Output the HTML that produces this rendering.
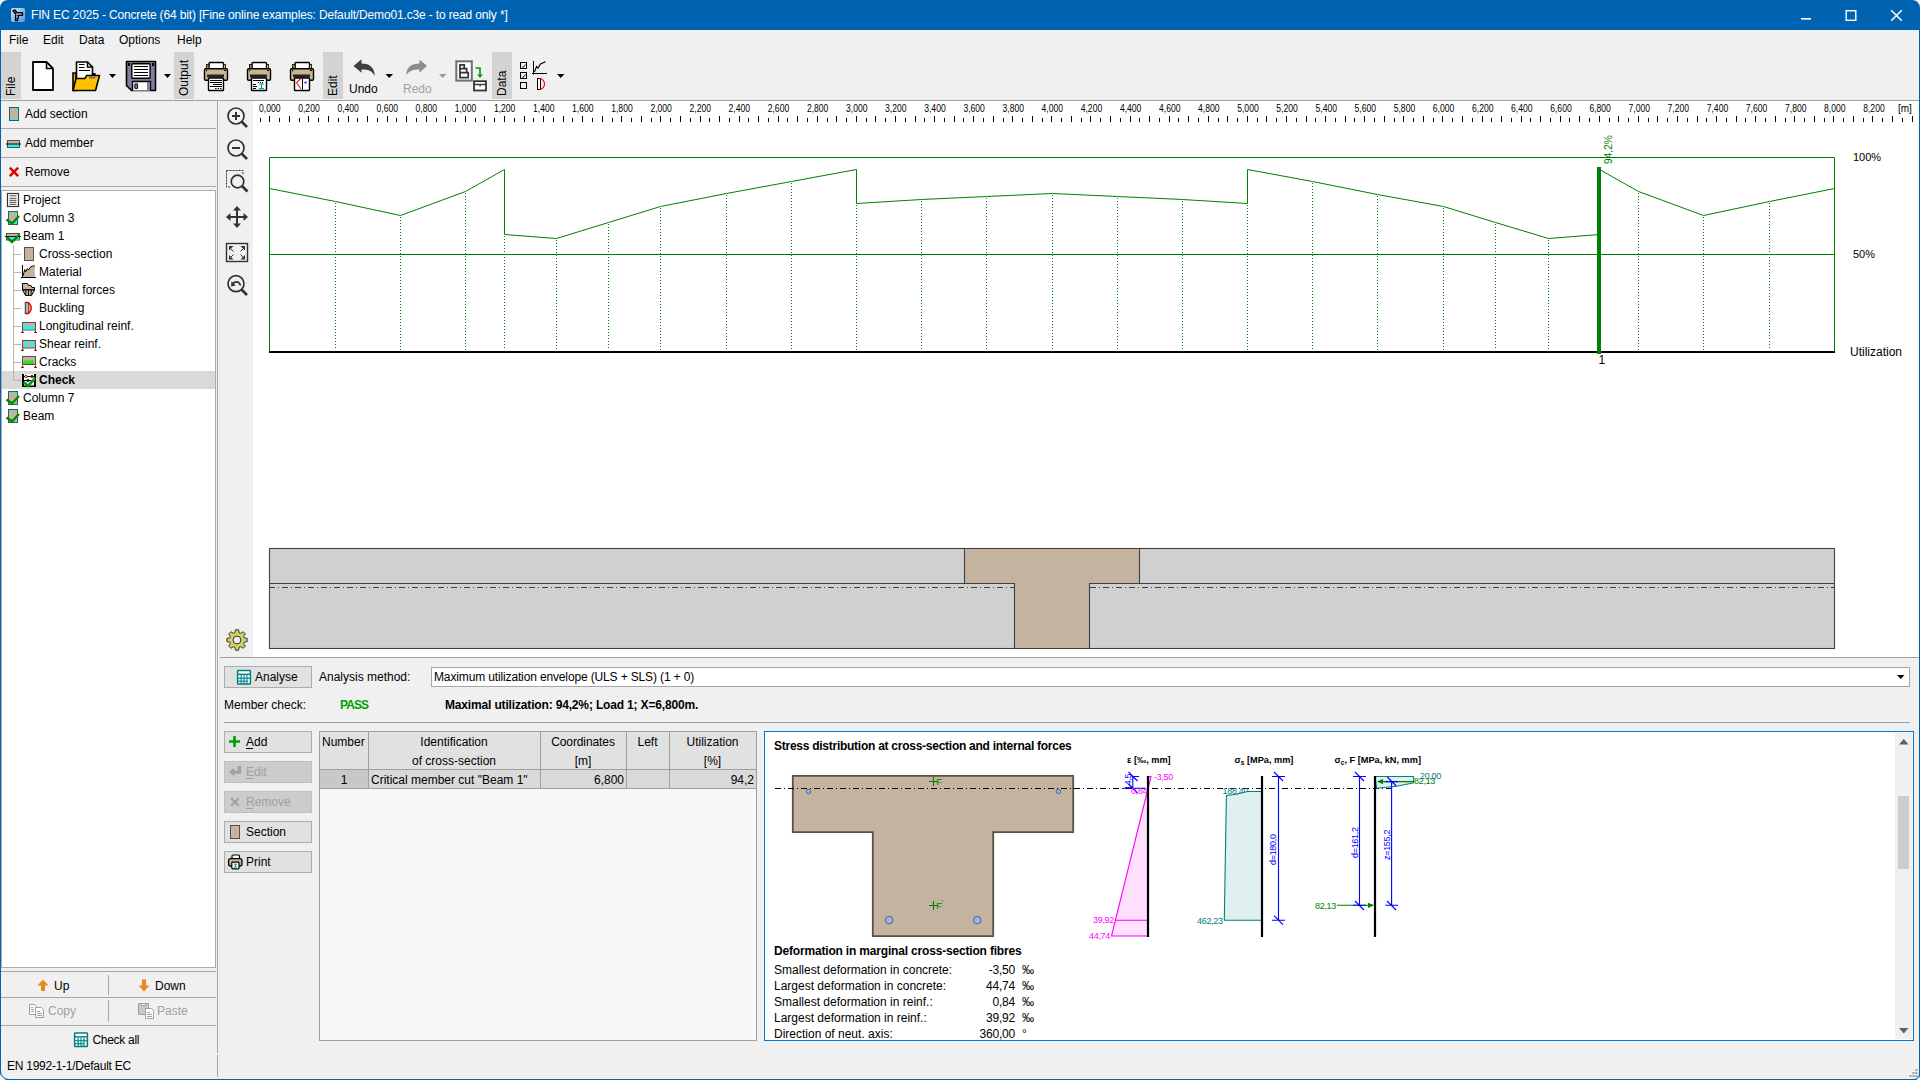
<!DOCTYPE html>
<html><head><meta charset="utf-8">
<style>
*{box-sizing:border-box;margin:0;padding:0}
html,body{width:1920px;height:1080px;overflow:hidden;background:#f0f0f0;font-family:"Liberation Sans",sans-serif;font-size:12px;color:#000}
.a{position:absolute}
.t{position:absolute;white-space:pre;line-height:14px;font-size:12px}
.b{font-weight:bold}
svg{position:absolute;overflow:visible}
</style></head><body>
<!-- window frame -->
<div class="a" style="left:0;top:0;width:1920px;height:30px;background:#0063b1"></div>
<div class="a" style="left:0;top:0;width:1px;height:1080px;background:#0063b1"></div>
<div class="a" style="left:1919px;top:0;width:1px;height:1080px;background:#0063b1"></div>
<div class="a" style="left:0;top:1079px;width:1920px;height:1px;background:#0063b1"></div>
<!-- title -->
<svg style="left:10px;top:7px" width="16" height="16" viewBox="10 7 16 16">
 <defs><linearGradient id="ig" x1="0" y1="0" x2="1" y2="1"><stop offset="0" stop-color="#cfe6f7"/><stop offset="0.5" stop-color="#8fc0e8"/><stop offset="1" stop-color="#4f95d6"/></linearGradient></defs>
 <rect x="11" y="8" width="14" height="14" rx="2" fill="url(#ig)"/>
 <path d="M12.8 10.8 L15 10 L17 12.8 L22.5 12.8 L22.5 15.2 L18.5 15.2 L17.5 20.5 L15.5 20.5 L15.8 14 Z" fill="#fff" stroke="#000" stroke-width="1.4" stroke-linejoin="round"/>
 <circle cx="15.5" cy="12.3" r="0.7" fill="#00f"/><circle cx="17.4" cy="15.5" r="0.7" fill="#00f"/><circle cx="16.5" cy="18.5" r="0.7" fill="#00f"/>
</svg>
<div class="t" style="left:31px;top:8px;color:#fff;letter-spacing:-0.15px">FIN EC 2025 - Concrete (64 bit) [Fine online examples: Default/Demo01.c3e - to read only *]</div>
<!-- window buttons -->
<svg style="left:1790px;top:0" width="120" height="30" viewBox="1790 0 120 30">
 <path d="M1801 18.8 H1811" stroke="#fff" stroke-width="1.6"/>
 <rect x="1846.2" y="10.7" width="9.6" height="9.6" fill="none" stroke="#fff" stroke-width="1.4"/>
 <path d="M1891.2 10.2 L1901.8 20.8 M1901.8 10.2 L1891.2 20.8" stroke="#fff" stroke-width="1.5"/>
</svg>
<!-- menu -->
<div class="t" style="left:9px;top:33px">File</div>
<div class="t" style="left:43px;top:33px">Edit</div>
<div class="t" style="left:79px;top:33px">Data</div>
<div class="t" style="left:119px;top:33px">Options</div>
<div class="t" style="left:177px;top:33px">Help</div>
<!-- toolbar -->
<!-- toolbar tabs -->
<div class="a" style="left:1px;top:52px;width:20px;height:47px;background:#d3d3d3"></div>
<div class="a" style="left:174px;top:52px;width:20px;height:47px;background:#d3d3d3"></div>
<div class="a" style="left:323px;top:52px;width:20px;height:47px;background:#d3d3d3"></div>
<div class="a" style="left:492px;top:52px;width:20px;height:47px;background:#d3d3d3"></div>
<div class="t" style="left:5px;top:96px;transform-origin:0 0;transform:rotate(-90deg);line-height:12px">File</div>
<div class="t" style="left:178px;top:96px;transform-origin:0 0;transform:rotate(-90deg);line-height:12px">Output</div>
<div class="t" style="left:327px;top:96px;transform-origin:0 0;transform:rotate(-90deg);line-height:12px">Edit</div>
<div class="t" style="left:496px;top:96px;transform-origin:0 0;transform:rotate(-90deg);line-height:12px">Data</div>
<div class="t" style="left:349px;top:82px">Undo</div>
<div class="t" style="left:403px;top:82px;color:#a0a0a0">Redo</div>
<svg style="left:0;top:0" width="600" height="100" viewBox="0 0 600 100">
 <!-- new -->
 <path d="M33 62 H46.5 L53 68.5 V90 H33 Z" fill="#fff" stroke="#000" stroke-width="1.8" stroke-linejoin="round"/>
 <path d="M46.5 62 V68.5 H53" fill="none" stroke="#000" stroke-width="1.6"/>
 <!-- open -->
 <path d="M73 73 H76 V90.5 H73 Z" fill="#ffb400" stroke="#000" stroke-width="1.6"/>
 <path d="M76.5 62 H87.5 L92.5 67 V79 H76.5 Z" fill="#fff" stroke="#000" stroke-width="1.6" stroke-linejoin="round"/>
 <path d="M87.5 62 V67 H92.5" fill="none" stroke="#000" stroke-width="1.4"/>
 <line x1="79" y1="64.5" x2="84.5" y2="64.5" stroke="#000" stroke-width="1"/>
 <line x1="79" y1="67.5" x2="84.5" y2="67.5" stroke="#000" stroke-width="1"/>
 <line x1="79" y1="70.5" x2="90" y2="70.5" stroke="#000" stroke-width="1"/>
 <path d="M92 73.5 H95 V75 Z" fill="#ffb400" stroke="#000" stroke-width="1.2"/>
 <path d="M76 78.5 H85 L86.5 75.5 H99.5 L95.5 90.5 H73 Z" fill="#ffc000" stroke="#000" stroke-width="1.6" stroke-linejoin="round"/>
 <rect x="89" y="77" width="6.5" height="1.5" fill="#5a6a9a"/>
 <path d="M109 74 H116 L112.5 78 Z" fill="#000"/>
 <!-- save -->
 <path d="M126.5 61.5 H155.5 V90.5 H131.5 L126.5 85.5 Z" fill="#7f7fa0" stroke="#000" stroke-width="1.6" stroke-linejoin="round"/>
 <rect x="131.8" y="63.8" width="18.3" height="14.5" rx="0.8" fill="#fff" stroke="#000" stroke-width="1.4"/>
 <g stroke="#000" stroke-width="1"><line x1="134" y1="66.5" x2="148" y2="66.5"/><line x1="134" y1="69.5" x2="148" y2="69.5"/><line x1="134" y1="72.5" x2="148" y2="72.5"/><line x1="134" y1="75.5" x2="148" y2="75.5"/></g>
 <rect x="128" y="63" width="2" height="3" fill="#000"/><rect x="152" y="63" width="2" height="3" fill="#000"/>
 <path d="M132.5 90.5 V81.5 H150.5 V90.5" fill="#fff" stroke="#000" stroke-width="1.4"/>
 <rect x="147" y="82" width="3" height="8" fill="#7f7fa0"/>
 <rect x="134.8" y="83.8" width="2.8" height="4.8" rx="0.6" fill="#7f7fa0" stroke="#000" stroke-width="1"/>
 <path d="M164 74 H171 L167.5 78 Z" fill="#000"/>
 <!-- printers -->
 <g id="pr">
  <rect x="209" y="62.5" width="14.5" height="6.5" rx="1" fill="#fff" stroke="#000" stroke-width="1.4"/>
  <rect x="206.5" y="64.5" width="2.5" height="4" fill="#9a8a6a" stroke="#000" stroke-width="0.8"/>
  <rect x="223.5" y="64.5" width="2" height="4" fill="#c8b68e" stroke="#000" stroke-width="0.8"/>
  <rect x="204.5" y="68.8" width="23" height="11.5" rx="1.2" fill="#c8b68e" stroke="#000" stroke-width="1.4"/>
  <rect x="206" y="70" width="1.2" height="1.2" fill="#000"/><rect x="224" y="70" width="2" height="1" fill="#000"/>
  <rect x="207" y="74.5" width="17" height="2.5" fill="#222"/>
  <rect x="207.5" y="77" width="16" height="1.5" fill="#777"/>
 </g>
 <rect x="208.5" y="78" width="15" height="12.5" rx="0.8" fill="#fff" stroke="#000" stroke-width="1.4"/>
 <g stroke="#000" stroke-width="1"><line x1="210" y1="80.5" x2="222" y2="80.5"/><line x1="210" y1="82.5" x2="222" y2="82.5"/><line x1="213" y1="84.5" x2="222" y2="84.5"/><line x1="210" y1="86.5" x2="222" y2="86.5"/><line x1="215" y1="88.5" x2="222" y2="88.5" stroke-dasharray="1.5 1"/></g>
 <use href="#pr" x="43"/>
 <rect x="251.5" y="78" width="15" height="12.5" rx="0.8" fill="#fff" stroke="#000" stroke-width="1.4"/>
 <g stroke="#000" stroke-width="1"><line x1="253" y1="80.5" x2="264" y2="80.5"/><line x1="258" y1="82.5" x2="264" y2="82.5" stroke-dasharray="1 1"/><line x1="253" y1="84.5" x2="256" y2="84.5"/><line x1="253" y1="86.5" x2="257" y2="86.5"/><line x1="253" y1="88.5" x2="256" y2="88.5"/></g>
 <path d="M259 84 H264 M261.5 84 V88.5 M259 88.5 H264" stroke="#0a9a9a" stroke-width="1.1" fill="none"/>
 <use href="#pr" x="86"/>
 <rect x="294.5" y="78" width="15" height="12.5" rx="0.8" fill="#fff" stroke="#000" stroke-width="1.4"/>
 <path d="M301 78.5 L296.5 82.5 L301 89" fill="none" stroke="#ff2020" stroke-width="1.1"/>
 <line x1="302.5" y1="78.5" x2="302.5" y2="89.5" stroke="#000" stroke-width="1"/>
 <path d="M303.5 82.5 L306.5 81 V84 Z" fill="#2040ff"/>
 <!-- undo -->
 <path d="M353.5 66 L361.5 59.2 V63.5 C368 63.5 374.5 66 374.8 76 C372 70.5 368 69.5 361.5 69.5 V72.8 Z" fill="#404040"/>
 <path d="M385.5 74 H393 L389.2 78 Z" fill="#000"/>
 <!-- redo -->
 <path d="M427 65.8 L419.5 59.7 V63.5 C413 63.5 406.5 66 406.2 75.5 C409 70.5 413 69.5 419.5 69.5 V72.8 Z" fill="#8c8c8c"/>
 <path d="M439 74 H446.5 L442.7 78 Z" fill="#999"/>
 <!-- layout -->
 <rect x="456.3" y="61.3" width="15.5" height="19.3" fill="#fff" stroke="#707070" stroke-width="2"/>
 <path d="M460 64.8 H464.2 V68.6 H466.6 V72.6 H468.2 V77.6 H460 Z M460 68.6 H464.2 M460 72.6 H466.6" fill="none" stroke="#333" stroke-width="1.7"/>
 <path d="M475.5 68 H480 V75" fill="none" stroke="#00a000" stroke-width="1.6"/>
 <path d="M477 74.5 H483 L480 78 Z" fill="#00a000"/>
 <rect x="474" y="81.2" width="12" height="9.3" fill="#fff" stroke="#333" stroke-width="1.8"/>
 <line x1="474" y1="84.5" x2="486" y2="84.5" stroke="#333" stroke-width="1.4"/>
 <rect x="479.5" y="85" width="1.2" height="1.5" fill="#333"/>
 <!-- data icons -->
 <g fill="none" stroke="#000" stroke-width="1">
  <rect x="520.5" y="62.5" width="6" height="6"/><rect x="520.5" y="72.5" width="6" height="6"/><rect x="520.5" y="82.5" width="6" height="6"/>
  <path d="M522 66.5 L523 67.5 L525.5 64.5 M522 76.5 L523 77.5 L525.5 74.5" stroke-width="0.9"/>
  <path d="M533.5 61 V74.5 M532 73.5 H547"/>
  <path d="M534.5 72 L536.5 66.5 L538 68 L540.5 64 L545.5 61.8" stroke-width="1.1"/>
 </g>
 <rect x="537.5" y="78.5" width="3" height="11" fill="#fff" stroke="#000" stroke-width="1"/>
 <path d="M539.5 78.5 A5 5.5 0 0 1 539.5 89.5" fill="none" stroke="#e00000" stroke-width="1.1"/>
 <path d="M557 74 H564.5 L560.7 78 Z" fill="#000"/>
</svg>

<div class="a" style="left:1px;top:100px;width:1918px;height:1px;background:#a0a0a0"></div>

<!-- left panel -->
<!-- left panel -->
<div class="a" style="left:1px;top:128px;width:215px;height:1px;background:#a8a8a8"></div>
<div class="a" style="left:1px;top:157px;width:215px;height:1px;background:#a8a8a8"></div>
<div class="a" style="left:1px;top:186px;width:215px;height:1px;background:#a8a8a8"></div>
<div class="a" style="left:217px;top:101px;width:1px;height:952px;background:#a8a8a8"></div><div class="a" style="left:217px;top:1055px;width:1px;height:22px;background:#a8a8a8"></div>
<div class="t" style="left:25px;top:107px">Add section</div>
<div class="t" style="left:25px;top:136px">Add member</div>
<div class="t" style="left:25px;top:165px">Remove</div>
<svg style="left:0;top:100px" width="30" height="90" viewBox="0 100 30 90">
 <rect x="9.5" y="107.5" width="9" height="13" fill="#c4b49f" stroke="#5a4f45" stroke-width="1"/>
 <g fill="#00ffff"><rect x="10" y="108" width="2" height="2"/><rect x="16" y="108" width="2" height="2"/><rect x="10" y="118" width="2" height="2"/><rect x="13" y="118" width="2" height="2"/><rect x="16" y="118" width="2" height="2"/></g>
 <rect x="7.5" y="140.5" width="12" height="7" fill="#c4b49f" stroke="#5a4f45" stroke-width="1"/>
 <rect x="8" y="145" width="11" height="2" fill="#00ffff"/>
 <line x1="6" y1="144" x2="21" y2="144" stroke="#000" stroke-width="1"/>
 <path d="M9.8 167.6 L18.2 176.2 M18.2 167.6 L9.8 176.2" stroke="#e00000" stroke-width="2.4"/>
</svg>
<div class="a" style="left:1px;top:190px;width:215px;height:778px;background:#fff;border:1px solid #acacac"></div>
<div class="a" style="left:2px;top:371px;width:213px;height:18px;background:#d9d9d9"></div>
<div class="a" style="left:13px;top:245px;width:1px;height:136px;background:#b4b4b4"></div>
<div class="t" style="left:23px;top:193px;">Project</div>
<div class="t" style="left:23px;top:211px;">Column 3</div>
<div class="t" style="left:23px;top:229px;">Beam 1</div>
<div class="t" style="left:39px;top:247px;">Cross-section</div>
<div class="a" style="left:14px;top:254px;width:7px;height:1px;background:#b4b4b4"></div>
<div class="t" style="left:39px;top:265px;">Material</div>
<div class="a" style="left:14px;top:272px;width:7px;height:1px;background:#b4b4b4"></div>
<div class="t" style="left:39px;top:283px;">Internal forces</div>
<div class="a" style="left:14px;top:290px;width:7px;height:1px;background:#b4b4b4"></div>
<div class="t" style="left:39px;top:301px;">Buckling</div>
<div class="a" style="left:14px;top:308px;width:7px;height:1px;background:#b4b4b4"></div>
<div class="t" style="left:39px;top:319px;">Longitudinal reinf.</div>
<div class="a" style="left:14px;top:326px;width:7px;height:1px;background:#b4b4b4"></div>
<div class="t" style="left:39px;top:337px;">Shear reinf.</div>
<div class="a" style="left:14px;top:344px;width:7px;height:1px;background:#b4b4b4"></div>
<div class="t" style="left:39px;top:355px;">Cracks</div>
<div class="a" style="left:14px;top:362px;width:7px;height:1px;background:#b4b4b4"></div>
<div class="t" style="left:39px;top:373px;font-weight:bold;">Check</div>
<div class="a" style="left:14px;top:380px;width:7px;height:1px;background:#b4b4b4"></div>
<div class="t" style="left:23px;top:391px;">Column 7</div>
<div class="t" style="left:23px;top:409px;">Beam</div>
<svg style="left:0;top:0" width="40" height="430" viewBox="0 0 40 430">
 <defs>
  <g id="colic">
   <rect x="8.5" y="211.5" width="9" height="13" fill="#c4b49f" stroke="#5a4f45" stroke-width="1"/>
   <g fill="#00ffff"><rect x="9" y="212" width="2" height="2"/><rect x="15" y="212" width="2" height="2"/><rect x="9" y="222" width="2" height="2"/><rect x="15" y="222" width="2" height="2"/></g>
   <path d="M6.5 219.5 L12 223.5 L19 216" fill="none" stroke="#008a00" stroke-width="2.4"/>
  </g>
  <g id="sup"><path d="M21 2 A1.5 1.5 0 0 1 24 2 Z M34 2 A1.5 1.5 0 0 1 37 2 Z" fill="#8b0000"/><path d="M22.5 -0.5 V1 M35.5 -0.5 V1" stroke="#8b0000" stroke-width="1"/></g>
 </defs>
 <!-- project -->
 <rect x="7.5" y="193.5" width="11" height="13" fill="#fff" stroke="#333" stroke-width="1.2"/>
 <g stroke="#333" stroke-width="0.9"><line x1="9.5" y1="195.8" x2="16.5" y2="195.8"/><line x1="9.5" y1="198.3" x2="16.5" y2="198.3"/><line x1="9.5" y1="200.3" x2="16.5" y2="200.3"/><line x1="9.5" y1="202.3" x2="16.5" y2="202.3"/><line x1="9.5" y1="204.3" x2="16.5" y2="204.3"/></g>
 <use href="#colic"/>
 <!-- beam1 -->
 <rect x="6.5" y="233.5" width="13" height="6.5" fill="#c4b49f" stroke="#5a4f45" stroke-width="1"/>
 <rect x="7" y="237.5" width="12" height="2" fill="#00ffff"/>
 <line x1="5" y1="236.5" x2="21" y2="236.5" stroke="#000" stroke-width="0.9"/>
 <path d="M7 237.5 L12 242 L19.5 234.5" fill="none" stroke="#008a00" stroke-width="2.4"/>
 <!-- cross-section -->
 <rect x="24.5" y="247.5" width="9" height="13" fill="#c4b49f" stroke="#5a4f45" stroke-width="1"/>
 <!-- material -->
 <path d="M23.5 277 L24.8 269.5 L25.5 272 L27.5 268.5 L28.5 270 L30.5 267 L32.5 266 H34.8 V277 Z" fill="#c4b49f"/>
 <path d="M22.5 265 V278 M21 277.5 H36 M23 276 L24.8 269.5 L25.5 272 L27.5 268.5 L28.5 270 L30.5 267 L32.5 266 H34.8" fill="none" stroke="#000" stroke-width="1"/>
 <!-- internal forces -->
 <path d="M22.5 283.5 H27.5 L28.5 285.5 H31 L32 287.5 H34.5 V290 L31.5 295.5 H25.5 L22.5 290 Z" fill="#c4b49f" stroke="#000" stroke-width="1"/>
 <path d="M22.5 289.8 H34.5" stroke="#000" stroke-width="1.3"/>
 <path d="M25.8 290 V295 M28.5 290 V295.5 M31.2 290 V295" stroke="#000" stroke-width="0.9"/>
 <!-- buckling -->
 <rect x="25.3" y="302.5" width="3.5" height="11" fill="#c4b49f" stroke="#333" stroke-width="1"/>
 <path d="M26 302.3 A5 5.6 0 0 1 26 313.8" fill="none" stroke="#ff0000" stroke-width="1.6"/>
 <!-- longitudinal -->
 <rect x="22.5" y="322.5" width="13" height="7.5" fill="#c4b49f" stroke="#5a4f45" stroke-width="1"/>
 <rect x="23" y="327" width="12" height="2.5" fill="#00ffff"/>
 <path d="M23 323.5 H25.5 L28.5 326.5" fill="none" stroke="#00ffff" stroke-width="1"/>
 <use href="#sup" y="331"/>
 <!-- shear -->
 <rect x="22.5" y="340.5" width="13" height="7.5" fill="#c4b49f" stroke="#5a4f45" stroke-width="1"/>
 <g fill="#00ffff"><rect x="24" y="341" width="1.2" height="6.5"/><rect x="27" y="341" width="1.2" height="6.5"/><rect x="30" y="341" width="1.2" height="6.5"/><rect x="33" y="341" width="1.2" height="6.5"/></g>
 <use href="#sup" y="349"/>
 <!-- cracks -->
 <rect x="22.5" y="356.5" width="13" height="8" fill="#c4b49f" stroke="#5a4f45" stroke-width="1"/>
 <path d="M23.5 364 L24.5 360 L25.5 364 L26.5 360 L27.5 364 L28.5 360 L29.5 364 L30.5 360 L31.5 364 L32.5 360 L33.5 364" fill="#20e020" stroke="#20e020" stroke-width="0.9"/>
 <use href="#sup" y="366"/>
 <!-- check -->
 <rect x="23" y="374" width="12" height="12" fill="#fff"/>
 <path d="M23 374 V386 H35 V374" fill="none" stroke="#000" stroke-width="2"/>
 <rect x="24" y="384.6" width="10" height="1" fill="#e0c8a8"/>
 <path d="M23 376.5 H35 M23 380.5 H35" stroke="#000" stroke-width="1"/>
 <ellipse cx="26" cy="376.5" rx="1.4" ry="1.1" fill="#e8e000" stroke="#000" stroke-width="0.6"/>
 <ellipse cx="32" cy="376.5" rx="1.4" ry="1.1" fill="#e00000" stroke="#000" stroke-width="0.6"/>
 <ellipse cx="28" cy="380.5" rx="1.4" ry="1.1" fill="#0000e0" stroke="#000" stroke-width="0.6"/>
 <path d="M23.8 382 L28 386 L35.3 378" fill="none" stroke="#00a000" stroke-width="2.6"/>
 <use href="#colic" y="180"/>
 <use href="#colic" y="198"/>
</svg>
<div class="a" style="left:1px;top:971px;width:215px;height:1px;background:#a8a8a8"></div>
<div class="a" style="left:1px;top:997px;width:215px;height:1px;background:#a8a8a8"></div>
<div class="a" style="left:1px;top:1025px;width:215px;height:1px;background:#a8a8a8"></div>
<div class="a" style="left:108px;top:975px;width:1px;height:20px;background:#a8a8a8"></div>
<div class="a" style="left:108px;top:1000px;width:1px;height:22px;background:#a8a8a8"></div>
<div class="t" style="left:54px;top:979px">Up</div>
<div class="t" style="left:155px;top:979px">Down</div>
<div class="t" style="left:48px;top:1004px;color:#a0a0a0">Copy</div>
<div class="t" style="left:157px;top:1004px;color:#a0a0a0">Paste</div>
<div class="t" style="left:92.5px;top:1033px;letter-spacing:-0.3px">Check all</div>
<div class="t" style="left:7px;top:1059px;letter-spacing:-0.25px">EN 1992-1-1/Default EC</div>
<svg style="left:0;top:960px" width="220" height="100" viewBox="0 960 220 100">
 <path d="M43 979.5 L48.5 985.5 H45 V991 H41 V985.5 H37.5 Z" fill="#e8891a"/>
 <path d="M144 991.5 L149.5 985.5 H146 V979.5 H142 V985.5 H138.5 Z" fill="#e8891a"/>
 <g fill="#fff" stroke="#a0a0a0" stroke-width="1">
  <path d="M29.5 1004.5 H34.5 L36.5 1006.5 V1014.5 H29.5 Z"/>
  <path d="M35.5 1007.5 H41.5 L43.5 1009.5 V1017.5 H35.5 Z"/>
  <path d="M138.5 1003.5 H148.5 V1014.5 H138.5 Z" fill="#c8c8c8"/>
  <path d="M141.5 1003.5 H145.5 V1005.5 H141.5 Z" fill="#fff"/>
  <path d="M145.5 1008.5 H151.5 L153.5 1010.5 V1018.5 H145.5 Z"/>
 </g>
 <g stroke="#a0a0a0" stroke-width="1">
  <path d="M31 1007.5 H33 M31 1009.5 H34 M31 1011.5 H34 M37 1011.5 H40 M37 1013.5 H42 M37 1015.5 H42 M147 1012.5 H150 M147 1014.5 H152 M147 1016.5 H152"/>
 </g>
<g transform="translate(-163 362.5)"> <rect x="237.6" y="670.6" width="12.8" height="13.4" rx="0.5" fill="#fff" stroke="#008080" stroke-width="1.5"/>
 <g fill="#008080"><rect x="238" y="673.6" width="12" height="1.4"/><rect x="240.6" y="675" width="1.1" height="9"/><rect x="243.5" y="675" width="1.1" height="9"/><rect x="246.4" y="675" width="1.1" height="9"/><rect x="238" y="677.7" width="12" height="1.1"/><rect x="238" y="680.6" width="9.5" height="1.1"/></g></g>
</svg>


<!-- main canvas -->
<div class="a" style="left:253px;top:101px;width:1666px;height:556px;background:#fff"></div>
<div class="a" style="left:220px;top:657px;width:1699px;height:1px;background:#a0a0a0"></div>
<svg style="left:0;top:0" width="1920" height="660" viewBox="0 0 1920 660">
<g fill="none" stroke="#333" stroke-width="1.7">
 <circle cx="236" cy="116" r="8"/><path d="M241.5 121.5 L247 127" stroke-width="2.6"/><path d="M232 116 H240 M236 112 V120" stroke-width="2"/>
 <circle cx="236" cy="148" r="8"/><path d="M241.5 153.5 L247 159" stroke-width="2.6"/><path d="M232 148 H240" stroke-width="2"/>
 <path d="M226.5 170.5 H243 V175 M226.5 170.5 V187 H231" stroke-width="1" stroke-dasharray="2 1"/>
 <circle cx="237.5" cy="181.5" r="6.3"/><path d="M242 186 L247.5 191.5" stroke-width="2.6"/>
 <path d="M229 217 H245 M237 209 V225" stroke-width="2"/>
 <rect x="226.5" y="243.5" width="21" height="18" stroke-width="1.4"/>
 <circle cx="236" cy="283.7" r="8"/><path d="M241.5 289.5 L247 295" stroke-width="2.6"/>
 <path d="M233 285 C233.5 281 239 280.5 240.5 285.5" stroke-width="1.7"/>
</g>
<g fill="#333">
 <path d="M226 217 L230.5 213 V221 Z M248 217 L243.5 213 V221 Z M237 206 L233 210.5 H241 Z M237 228 L233 223.5 H241 Z"/>
 <path d="M229 246 H233.5 L229 250.5 Z M245 246 V250.5 L240.5 246 Z M229 259.5 V255 L233.5 259.5 Z M245 259.5 H240.5 L245 255 Z"/>
 <path d="M231.5 281 L235.5 285.5 L231 286.5 Z"/>
</g>
<g stroke="#333" stroke-width="1"><path d="M230.5 248.5 L233.5 251.5 M243.5 248.5 L240.5 251.5 M230.5 257.5 L233.5 254.5 M243.5 257.5 L240.5 254.5"/></g>

<g transform="translate(237 640)">
 <path d="M-2.09 -7.31 L-1.61 -10.17 L1.61 -10.17 L2.09 -7.31 L3.68 -6.65 L6.05 -8.33 L8.33 -6.05 L6.65 -3.68 L7.31 -2.09 L10.17 -1.61 L10.17 1.61 L7.31 2.09 L6.65 3.68 L8.33 6.05 L6.05 8.33 L3.68 6.65 L2.09 7.31 L1.61 10.17 L-1.61 10.17 L-2.09 7.31 L-3.68 6.65 L-6.05 8.33 L-8.33 6.05 L-6.65 3.68 L-7.31 2.09 L-10.17 1.61 L-10.17 -1.61 L-7.31 -2.09 L-6.65 -3.68 L-8.33 -6.05 L-6.05 -8.33 L-3.68 -6.65 Z" fill="#d0d064" stroke="#333" stroke-width="1"/>
 <circle r="3.9" fill="#f0f0f0" stroke="#333" stroke-width="1"/>
</g>
<path d="M260.5 118 V122 M269.5 116 V122 M279.5 118 V122 M289.5 116 V122 M299.5 118 V122 M308.5 116 V122 M318.5 118 V122 M328.5 116 V122 M338.5 118 V122 M348.5 116 V122 M357.5 118 V122 M367.5 116 V122 M377.5 118 V122 M387.5 116 V122 M396.5 118 V122 M406.5 116 V122 M416.5 118 V122 M426.5 116 V122 M436.5 118 V122 M445.5 116 V122 M455.5 118 V122 M465.5 116 V122 M475.5 118 V122 M484.5 116 V122 M494.5 118 V122 M504.5 116 V122 M514.5 118 V122 M524.5 116 V122 M533.5 118 V122 M543.5 116 V122 M553.5 118 V122 M563.5 116 V122 M572.5 118 V122 M582.5 116 V122 M592.5 118 V122 M602.5 116 V122 M612.5 118 V122 M621.5 116 V122 M631.5 118 V122 M641.5 116 V122 M651.5 118 V122 M660.5 116 V122 M670.5 118 V122 M680.5 116 V122 M690.5 118 V122 M700.5 116 V122 M709.5 118 V122 M719.5 116 V122 M729.5 118 V122 M739.5 116 V122 M748.5 118 V122 M758.5 116 V122 M768.5 118 V122 M778.5 116 V122 M787.5 118 V122 M797.5 116 V122 M807.5 118 V122 M817.5 116 V122 M827.5 118 V122 M836.5 116 V122 M846.5 118 V122 M856.5 116 V122 M866.5 118 V122 M875.5 116 V122 M885.5 118 V122 M895.5 116 V122 M905.5 118 V122 M915.5 116 V122 M924.5 118 V122 M934.5 116 V122 M944.5 118 V122 M954.5 116 V122 M963.5 118 V122 M973.5 116 V122 M983.5 118 V122 M993.5 116 V122 M1003.5 118 V122 M1012.5 116 V122 M1022.5 118 V122 M1032.5 116 V122 M1042.5 118 V122 M1051.5 116 V122 M1061.5 118 V122 M1071.5 116 V122 M1081.5 118 V122 M1090.5 116 V122 M1100.5 118 V122 M1110.5 116 V122 M1120.5 118 V122 M1130.5 116 V122 M1139.5 118 V122 M1149.5 116 V122 M1159.5 118 V122 M1169.5 116 V122 M1178.5 118 V122 M1188.5 116 V122 M1198.5 118 V122 M1208.5 116 V122 M1218.5 118 V122 M1227.5 116 V122 M1237.5 118 V122 M1247.5 116 V122 M1257.5 118 V122 M1266.5 116 V122 M1276.5 118 V122 M1286.5 116 V122 M1296.5 118 V122 M1306.5 116 V122 M1315.5 118 V122 M1325.5 116 V122 M1335.5 118 V122 M1345.5 116 V122 M1354.5 118 V122 M1364.5 116 V122 M1374.5 118 V122 M1384.5 116 V122 M1394.5 118 V122 M1403.5 116 V122 M1413.5 118 V122 M1423.5 116 V122 M1433.5 118 V122 M1442.5 116 V122 M1452.5 118 V122 M1462.5 116 V122 M1472.5 118 V122 M1482.5 116 V122 M1491.5 118 V122 M1501.5 116 V122 M1511.5 118 V122 M1521.5 116 V122 M1530.5 118 V122 M1540.5 116 V122 M1550.5 118 V122 M1560.5 116 V122 M1569.5 118 V122 M1579.5 116 V122 M1589.5 118 V122 M1599.5 116 V122 M1609.5 118 V122 M1618.5 116 V122 M1628.5 118 V122 M1638.5 116 V122 M1648.5 118 V122 M1657.5 116 V122 M1667.5 118 V122 M1677.5 116 V122 M1687.5 118 V122 M1697.5 116 V122 M1706.5 118 V122 M1716.5 116 V122 M1726.5 118 V122 M1736.5 116 V122 M1745.5 118 V122 M1755.5 116 V122 M1765.5 118 V122 M1775.5 116 V122 M1785.5 118 V122 M1794.5 116 V122 M1804.5 118 V122 M1814.5 116 V122 M1824.5 118 V122 M1833.5 116 V122 M1843.5 118 V122 M1853.5 116 V122 M1863.5 118 V122 M1872.5 116 V122 M1882.5 118 V122 M1892.5 116 V122 M1902.5 118 V122 M1912.5 116 V122" stroke="#000" stroke-width="1"/>
<g font-family="Liberation Sans" font-size="10.2"><text x="259.1" y="112" textLength="21.5" lengthAdjust="spacingAndGlyphs">0,000</text><text x="298.2" y="112" textLength="21.5" lengthAdjust="spacingAndGlyphs">0,200</text><text x="337.4" y="112" textLength="21.5" lengthAdjust="spacingAndGlyphs">0,400</text><text x="376.5" y="112" textLength="21.5" lengthAdjust="spacingAndGlyphs">0,600</text><text x="415.6" y="112" textLength="21.5" lengthAdjust="spacingAndGlyphs">0,800</text><text x="454.7" y="112" textLength="21.5" lengthAdjust="spacingAndGlyphs">1,000</text><text x="493.9" y="112" textLength="21.5" lengthAdjust="spacingAndGlyphs">1,200</text><text x="533.0" y="112" textLength="21.5" lengthAdjust="spacingAndGlyphs">1,400</text><text x="572.1" y="112" textLength="21.5" lengthAdjust="spacingAndGlyphs">1,600</text><text x="611.2" y="112" textLength="21.5" lengthAdjust="spacingAndGlyphs">1,800</text><text x="650.4" y="112" textLength="21.5" lengthAdjust="spacingAndGlyphs">2,000</text><text x="689.5" y="112" textLength="21.5" lengthAdjust="spacingAndGlyphs">2,200</text><text x="728.6" y="112" textLength="21.5" lengthAdjust="spacingAndGlyphs">2,400</text><text x="767.7" y="112" textLength="21.5" lengthAdjust="spacingAndGlyphs">2,600</text><text x="806.9" y="112" textLength="21.5" lengthAdjust="spacingAndGlyphs">2,800</text><text x="846.0" y="112" textLength="21.5" lengthAdjust="spacingAndGlyphs">3,000</text><text x="885.1" y="112" textLength="21.5" lengthAdjust="spacingAndGlyphs">3,200</text><text x="924.2" y="112" textLength="21.5" lengthAdjust="spacingAndGlyphs">3,400</text><text x="963.4" y="112" textLength="21.5" lengthAdjust="spacingAndGlyphs">3,600</text><text x="1002.5" y="112" textLength="21.5" lengthAdjust="spacingAndGlyphs">3,800</text><text x="1041.6" y="112" textLength="21.5" lengthAdjust="spacingAndGlyphs">4,000</text><text x="1080.7" y="112" textLength="21.5" lengthAdjust="spacingAndGlyphs">4,200</text><text x="1119.9" y="112" textLength="21.5" lengthAdjust="spacingAndGlyphs">4,400</text><text x="1159.0" y="112" textLength="21.5" lengthAdjust="spacingAndGlyphs">4,600</text><text x="1198.1" y="112" textLength="21.5" lengthAdjust="spacingAndGlyphs">4,800</text><text x="1237.2" y="112" textLength="21.5" lengthAdjust="spacingAndGlyphs">5,000</text><text x="1276.3" y="112" textLength="21.5" lengthAdjust="spacingAndGlyphs">5,200</text><text x="1315.5" y="112" textLength="21.5" lengthAdjust="spacingAndGlyphs">5,400</text><text x="1354.6" y="112" textLength="21.5" lengthAdjust="spacingAndGlyphs">5,600</text><text x="1393.7" y="112" textLength="21.5" lengthAdjust="spacingAndGlyphs">5,800</text><text x="1432.8" y="112" textLength="21.5" lengthAdjust="spacingAndGlyphs">6,000</text><text x="1472.0" y="112" textLength="21.5" lengthAdjust="spacingAndGlyphs">6,200</text><text x="1511.1" y="112" textLength="21.5" lengthAdjust="spacingAndGlyphs">6,400</text><text x="1550.2" y="112" textLength="21.5" lengthAdjust="spacingAndGlyphs">6,600</text><text x="1589.4" y="112" textLength="21.5" lengthAdjust="spacingAndGlyphs">6,800</text><text x="1628.5" y="112" textLength="21.5" lengthAdjust="spacingAndGlyphs">7,000</text><text x="1667.6" y="112" textLength="21.5" lengthAdjust="spacingAndGlyphs">7,200</text><text x="1706.7" y="112" textLength="21.5" lengthAdjust="spacingAndGlyphs">7,400</text><text x="1745.8" y="112" textLength="21.5" lengthAdjust="spacingAndGlyphs">7,600</text><text x="1785.0" y="112" textLength="21.5" lengthAdjust="spacingAndGlyphs">7,800</text><text x="1824.1" y="112" textLength="21.5" lengthAdjust="spacingAndGlyphs">8,000</text><text x="1863.2" y="112" textLength="21.5" lengthAdjust="spacingAndGlyphs">8,200</text></g>
<text x="1898" y="112" font-family="Liberation Sans" font-size="10">[m]</text>
<g fill="none" stroke="#008000" stroke-width="1">
<path d="M269.5 351 V157.5 H1834.5 V351"/>
<path d="M269.5 254.5 H1834.5"/>
<path d="M269.5 188.5 L335.5 201.5 L400.5 215.5 L465.5 191.5 L504.5 169.5 L504.5 234.5 L556.5 238.5 L608.5 222.5 L660.5 206.5 L726.5 193.5 L791.5 181.5 L856.5 169.5 L856.5 203.5 L921.5 199.5 L986.5 196.5 L1052.5 193.5 L1117.5 196.5 L1182.5 199.5 L1247.5 203.5 L1247.5 169.5 L1312.5 181.5 L1377.5 194.5 L1443.5 206.5 L1495.5 222.5 L1548.5 238.5 L1599.5 234.5 L1599.5 169.5 L1638.5 191.5 L1703.5 215.5 L1769.5 201.5 L1834.5 188.5"/>
<path d="M335.5 203 V350 M400.5 217 V350 M465.5 193 V350 M504.5 236 V350 M556.5 240 V350 M608.5 224 V350 M660.5 208 V350 M726.5 195 V350 M791.5 183 V350 M856.5 205 V350 M921.5 201 V350 M986.5 198 V350 M1052.5 195 V350 M1117.5 198 V350 M1182.5 201 V350 M1247.5 205 V350 M1312.5 183 V350 M1377.5 196 V350 M1443.5 208 V350 M1495.5 224 V350 M1548.5 240 V350 M1638.5 193 V350 M1703.5 217 V350 M1769.5 203 V350" stroke-dasharray="1 2"/>
</g>
<path d="M269 352 H1835" stroke="#000" stroke-width="2"/>
<rect x="1597" y="167" width="4" height="187" fill="#008000"/>
<text x="1611.5" y="164" transform="rotate(-90 1611.5 164)" font-family="Liberation Sans" font-size="10.2" fill="#008000">94,2%</text>
<text x="1598.5" y="364" font-family="Liberation Sans" font-size="12">1</text>
<g font-family="Liberation Sans" font-size="11"><text x="1853" y="161">100%</text><text x="1853" y="258">50%</text></g>
<text x="1850" y="356" font-family="Liberation Sans" font-size="12">Utilization</text>
<g stroke="#404040" stroke-width="1.1">
 <rect x="269.5" y="548.5" width="1565" height="100" fill="#d0d0d0"/>
 <path d="M269.5 583.5 H1014.5 M1089.5 583.5 H1834.5" fill="none"/>
 <path d="M964.5 548.5 H1139.5 V583.5 H1089.5 V648.5 H1014.5 V583.5 H964.5 Z" fill="#c4b49f"/>
 <path d="M269 587.5 H1014" stroke-dasharray="6 3 1 3" stroke-width="1.1"/><path d="M1090 587.5 H1834" stroke-dasharray="6 3 1 3" stroke-width="1.1"/>
</g>
</svg>

<!-- bottom -->
<!-- analysis row -->
<div class="a" style="left:224px;top:666px;width:88px;height:22px;background:#e1e1e1;border:1px solid #adadad"></div>
<svg style="left:0;top:0" width="260" height="900" viewBox="0 0 260 900">
 <g id="calc">
 <rect x="237.6" y="670.6" width="12.8" height="13.4" rx="0.5" fill="#fff" stroke="#008080" stroke-width="1.5"/>
 <g fill="#008080"><rect x="238" y="673.6" width="12" height="1.4"/><rect x="240.6" y="675" width="1.1" height="9"/><rect x="243.5" y="675" width="1.1" height="9"/><rect x="246.4" y="675" width="1.1" height="9"/><rect x="238" y="677.7" width="12" height="1.1"/><rect x="238" y="680.6" width="9.5" height="1.1"/></g>
 </g>
</svg>
<div class="t" style="left:255px;top:670px">Analyse</div>
<div class="t" style="left:319px;top:670px">Analysis method:</div>
<div class="a" style="left:431px;top:667px;width:1479px;height:20px;background:#fff;border:1px solid #a6a6a6"></div>
<div class="t" style="left:434px;top:670px;letter-spacing:-0.14px">Maximum utilization envelope (ULS + SLS) (1 + 0)</div>
<svg style="left:1890px;top:670px" width="20" height="12" viewBox="1890 670 20 12"><path d="M1897 675 H1904.5 L1900.75 679 Z" fill="#000"/></svg>
<div class="t" style="left:224px;top:698px">Member check:</div>
<div class="t b" style="left:340px;top:698px;color:#00a000;letter-spacing:-0.9px">PASS</div>
<div class="t b" style="left:445px;top:698px;letter-spacing:-0.16px">Maximal utilization: 94,2%; Load 1; X=6,800m.</div>
<div class="a" style="left:224px;top:722px;width:1686px;height:1px;background:#a0a0a0"></div>

<div class="a" style="left:224px;top:731px;width:88px;height:22px;background:#e1e1e1;border:1px solid #adadad"></div>
<div class="t" style="left:246px;top:735px;color:#000">Add</div>
<div class="a" style="left:246px;top:748px;width:7px;height:1px;background:#000"></div>
<div class="a" style="left:224px;top:761px;width:88px;height:22px;background:#cccccc;border:1px solid #bfbfbf"></div>
<div class="t" style="left:246px;top:765px;color:#a0a0a0">Edit</div>
<div class="a" style="left:246px;top:778px;width:7px;height:1px;background:#a0a0a0"></div>
<div class="a" style="left:224px;top:791px;width:88px;height:22px;background:#cccccc;border:1px solid #bfbfbf"></div>
<div class="t" style="left:246px;top:795px;color:#a0a0a0">Remove</div>
<div class="a" style="left:246px;top:808px;width:7px;height:1px;background:#a0a0a0"></div>
<div class="a" style="left:224px;top:821px;width:88px;height:22px;background:#e1e1e1;border:1px solid #adadad"></div>
<div class="t" style="left:246px;top:825px;color:#000">Section</div>
<div class="a" style="left:224px;top:851px;width:88px;height:22px;background:#e1e1e1;border:1px solid #adadad"></div>
<div class="t" style="left:246px;top:855px;color:#000">Print</div>
<svg style="left:0;top:0" width="260" height="900" viewBox="0 0 260 900">
 <path d="M229 741.5 H240 M234.5 736 V747" stroke="#00a000" stroke-width="2.6"/>
 <path d="M239.4 766 V772.2 H233" fill="none" stroke="#a0a0a0" stroke-width="3.2"/>
 <path d="M229 772.2 L234.2 767.8 V776.6 Z" fill="#a0a0a0"/>
 <path d="M231.2 798.2 L238.8 805.8 M238.8 798.2 L231.2 805.8" stroke="#a0a0a0" stroke-width="2"/>
 <rect x="230.5" y="825.5" width="9" height="13" fill="#c4b49f" stroke="#5a4f45" stroke-width="1"/>
 <rect x="232" y="855" width="7.5" height="4" rx="1" fill="#fff" stroke="#000" stroke-width="1.2"/>
 <rect x="228.6" y="858.6" width="13.3" height="7.5" rx="2" fill="#c8b68e" stroke="#000" stroke-width="1.3"/>
 <rect x="231.8" y="862.2" width="7.2" height="6.6" rx="0.8" fill="#fff" stroke="#000" stroke-width="1.2"/>
 <path d="M233.8 864.2 H237 M233.8 867 H237 M235.4 864.2 V867" stroke="#008080" stroke-width="0.9"/>
</svg>

<div class="a" style="left:319px;top:731px;width:438px;height:310px;background:#f7f7f7;border:1px solid #a0a0a0"></div>
<div class="a" style="left:320px;top:732px;width:436px;height:37px;background:#e1e1e1"></div>
<div class="a" style="left:320px;top:770px;width:48px;height:18px;background:#c8c8c8"></div>
<div class="a" style="left:369px;top:770px;width:387px;height:18px;background:#d9d9d9"></div>
<div class="a" style="left:320px;top:769px;width:436px;height:1px;background:#a0a0a0"></div>
<div class="a" style="left:320px;top:788px;width:436px;height:1px;background:#a0a0a0"></div>
<div class="a" style="left:368px;top:732px;width:1px;height:56px;background:#a0a0a0"></div>
<div class="a" style="left:540px;top:732px;width:1px;height:56px;background:#a0a0a0"></div>
<div class="a" style="left:626px;top:732px;width:1px;height:56px;background:#a0a0a0"></div>
<div class="a" style="left:669px;top:732px;width:1px;height:56px;background:#a0a0a0"></div>
<div class="t" style="left:322px;top:735px">Number</div>
<div class="t" style="left:368px;top:735px;width:172px;text-align:center">Identification</div>
<div class="t" style="left:368px;top:754px;width:172px;text-align:center">of cross-section</div>
<div class="t" style="left:540px;top:735px;width:86px;text-align:center;letter-spacing:-0.1px">Coordinates</div>
<div class="t" style="left:540px;top:754px;width:86px;text-align:center">[m]</div>
<div class="t" style="left:626px;top:735px;width:43px;text-align:center">Left</div>
<div class="t" style="left:669px;top:735px;width:87px;text-align:center">Utilization</div>
<div class="t" style="left:669px;top:754px;width:87px;text-align:center">[%]</div>
<div class="t" style="left:320px;top:773px;width:48px;text-align:center">1</div>
<div class="t" style="left:371px;top:773px">Critical member cut "Beam 1"</div>
<div class="t" style="left:540px;top:773px;width:84px;text-align:right">6,800</div>
<div class="t" style="left:669px;top:773px;width:85px;text-align:right">94,2</div>

<div class="a" style="left:764px;top:731px;width:1150px;height:310px;background:#fff;border:1px solid #0078d7"></div>
<div class="a" style="left:1895px;top:733px;width:17px;height:306px;background:#f0f0f0"></div>
<div class="a" style="left:1898px;top:796px;width:11px;height:73px;background:#cdcdcd"></div>
<svg style="left:1895px;top:733px" width="17" height="306" viewBox="1895 733 17 306"><path d="M1899 744.5 H1908.5 L1903.75 739 Z M1899 1028 H1908.5 L1903.75 1033.5 Z" fill="#606060"/></svg>
<div class="t b" style="left:774px;top:739px;letter-spacing:-0.26px">Stress distribution at cross-section and internal forces</div>
<div class="t b" style="left:774px;top:944px;letter-spacing:-0.18px">Deformation in marginal cross-section fibres</div>

<div class="t" style="left:774px;top:963px">Smallest deformation in concrete:</div>
<div class="t" style="left:955px;top:963px;width:60px;text-align:right;letter-spacing:-0.2px">-3,50</div>
<div class="t" style="left:1022px;top:963px">‰</div>
<div class="t" style="left:774px;top:979px">Largest deformation in concrete:</div>
<div class="t" style="left:955px;top:979px;width:60px;text-align:right;letter-spacing:-0.2px">44,74</div>
<div class="t" style="left:1022px;top:979px">‰</div>
<div class="t" style="left:774px;top:995px">Smallest deformation in reinf.:</div>
<div class="t" style="left:955px;top:995px;width:60px;text-align:right;letter-spacing:-0.2px">0,84</div>
<div class="t" style="left:1022px;top:995px">‰</div>
<div class="t" style="left:774px;top:1011px">Largest deformation in reinf.:</div>
<div class="t" style="left:955px;top:1011px;width:60px;text-align:right;letter-spacing:-0.2px">39,92</div>
<div class="t" style="left:1022px;top:1011px">‰</div>
<div class="t" style="left:774px;top:1027px">Direction of neut. axis:</div>
<div class="t" style="left:955px;top:1027px;width:60px;text-align:right;letter-spacing:-0.2px">360,00</div>
<div class="t" style="left:1022px;top:1027px">°</div>
<svg style="left:765px;top:732px;overflow:hidden" width="1130" height="308" viewBox="765 732 1130 308">
 <!-- T section -->
 <path d="M792.8 775.8 H1073.2 V832.2 H993.2 V936.2 H872.8 V832.2 H792.8 Z" fill="#c4b49f" stroke="#5a5045" stroke-width="1.8" stroke-linejoin="miter"/>
 <path d="M775 788.5 H1391" stroke="#000" stroke-width="1.2" stroke-dasharray="6 3 1 3"/>
 <g fill="#9fb4d8" stroke="#4a5ea8" stroke-width="1">
  <circle cx="808.5" cy="791.5" r="2.2"/><circle cx="1058.5" cy="791.5" r="2.2"/>
  <circle cx="889.2" cy="920.2" r="3.8"/><circle cx="977.3" cy="920.2" r="3.8"/>
 </g>
 <g stroke="#008000" stroke-width="1.1" fill="none">
  <path d="M929 781.5 H938 M933.5 777 V786"/>
  <path d="M929 905.5 H938 M933.5 901 V910"/>
 </g>
 <g font-family="Liberation Sans" font-size="9.5" fill="#008000"><text x="936.3" y="785">F</text><text x="936.3" y="909">F</text><text x="941.5" y="905" font-size="7">'</text></g>
 <!-- strain -->
 <path d="M1148 776.5 L1150.8 776.5 L1111.8 936 H1148 Z" fill="#ffe0ff"/>
 <path d="M1148.5 776.5 H1151 L1111.5 936 H1148 M1115.5 920.2 H1148" fill="none" stroke="#ff00ff" stroke-width="1.1"/>
 <path d="M1148 776 V937" stroke="#000" stroke-width="2.2"/>
 <g stroke="#0000ff" stroke-width="1.1" fill="none">
  <path d="M1132.8 776.5 V788.3 M1131.5 776.5 H1139 M1123 788.3 H1145 M1128.5 772 L1137.5 781 M1128.5 784 L1137.5 793"/>
 </g>
 <g font-family="Liberation Sans" font-size="9" letter-spacing="-0.3">
  <text x="1154" y="779.5" fill="#ff00ff">-3,50</text>
  <text x="1131" y="794" fill="#ff00ff">0,84</text>
  <text x="1093" y="923" fill="#ff00ff">39,92</text>
  <text x="1089" y="938.5" fill="#ff00ff">44,74</text>
  <text x="1130.5" y="790" fill="#0000ff" transform="rotate(-90 1130.5 790)">14,5</text>
  <text x="1197" y="923.5" fill="#008080">462,23</text>
  <text x="1222.5" y="794" fill="#008080">188,40</text>
  <text x="1276" y="865" fill="#0000ff" transform="rotate(-90 1276 865)">d=180,0</text>
  <text x="1420" y="778.5" fill="#008080">20,00</text>
  <text x="1414" y="784" fill="#008000">82,13</text>
  <text x="1315" y="908.5" fill="#008000">82,13</text>
  <text x="1358" y="858" fill="#0000ff" transform="rotate(-90 1358 858)">d=161,2</text>
  <text x="1389.5" y="860" fill="#0000ff" transform="rotate(-90 1389.5 860)">z=155,2</text>
 </g>
 <g font-family="Liberation Sans" font-weight="bold" font-size="9.2">
  <text x="1127" y="763">ε [‰, mm]</text>
  <text x="1234.5" y="763">σ<tspan font-size="6.5" dy="1.5">s</tspan><tspan dy="-1.5"> [MPa, mm]</tspan></text>
  <text x="1334.5" y="763">σ<tspan font-size="6.5" dy="1.5">c</tspan><tspan dy="-1.5">, F [MPa, kN, mm]</tspan></text>
 </g>
 <!-- stress steel -->
 <path d="M1262 791.5 H1247.5 L1236.5 794.3 L1226.4 795.5 L1224.3 920.2 H1262 Z" fill="#e0f0f0" stroke="#008080" stroke-width="1.1"/>
 <path d="M1262 776 V937" stroke="#000" stroke-width="2.2"/>
 <g stroke="#0000ff" stroke-width="1.1" fill="none">
  <path d="M1278.5 776.5 V920.2 M1272 776.5 H1285 M1272 920.2 H1285 M1274 772 L1283 781 M1274 915.7 L1283 924.7"/>
 </g>
 <!-- concrete block -->
 <path d="M1375 776.5 H1413.6 V782.8 L1396.7 786.2 L1376.7 788.2 Z" fill="#e0f0f0" stroke="#008080" stroke-width="1.1"/>
 <path d="M1375 776 V937" stroke="#000" stroke-width="2.2"/>
 <g stroke="#008000" stroke-width="1.1" fill="none">
  <path d="M1413.6 781.6 H1378 M1336.9 905.3 H1373"/>
 </g>
 <path d="M1377 781.6 L1383 779 V784.2 Z M1374 905.3 L1368 902.7 V907.9 Z" fill="#008000"/>
 <g stroke="#0000ff" stroke-width="1.1" fill="none">
  <path d="M1359.5 776.5 V905.3 M1353 776.5 H1366 M1353 905.3 H1366 M1355 772 L1364 781 M1355 901 L1364 910"/>
  <path d="M1391.6 781.6 V905.3 M1385.3 781.6 H1398 M1385.3 905.3 H1398 M1387.3 777 L1396.3 786 M1387 901 L1396 910"/>
 </g>
</svg>

<svg style="left:0;top:0" width="1920" height="1080" viewBox="0 0 1920 1080">
 <path d="M0 0 H8 A8 8 0 0 0 0 8 Z" fill="#f4f4f4"/>
 <path d="M1920 0 H1912 A8 8 0 0 1 1920 8 Z" fill="#f4f4f4"/>
 <path d="M0 1080 V1072 A8 8 0 0 0 8 1080 Z" fill="#f4f4f4"/>
 <path d="M0.5 1071 A8.5 8.5 0 0 0 9 1079.5" fill="none" stroke="#0063b1" stroke-width="1"/>
 <path d="M1920 1080 V1075 A5 5 0 0 1 1915 1080 Z" fill="#f4f4f4"/>
 <path d="M1919.5 1074 A5.5 5.5 0 0 1 1914 1079.5" fill="none" stroke="#0063b1" stroke-width="1"/>
 <g fill="#a0a0a0"><rect x="1915.5" y="1069" width="2" height="2"/><rect x="1912.5" y="1072" width="2" height="2"/><rect x="1915.5" y="1072" width="2" height="2"/><rect x="1909.5" y="1075" width="2" height="2"/><rect x="1912.5" y="1075" width="2" height="2"/><rect x="1915.5" y="1075" width="2" height="2"/></g>
</svg>
</body></html>
